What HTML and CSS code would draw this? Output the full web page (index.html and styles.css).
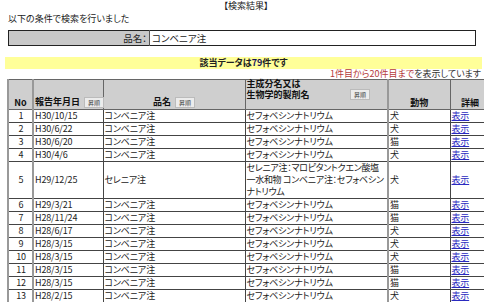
FILE: index.html
```html
<!DOCTYPE html>
<html lang="ja">
<head>
<meta charset="utf-8">
<link rel="stylesheet" href="styles.css">
</head>
<body>
<div class="title">【検索結果】</div>
<div class="cond">以下の条件で検索を行いました</div>
<table class="search">
  <tr><th>品名：</th><td>コンベニア注</td></tr>
</table>
<div class="hit">該当データは<span class="num">79</span>件です</div>
<div class="range"><span class="red">1件目から20件目まで</span>を表示しています</div>
<table class="results">
  <colgroup>
    <col class="c-no"><col class="c-date"><col class="c-name"><col class="c-ing"><col class="c-ani"><col class="c-det">
  </colgroup>
  <thead>
    <tr>
      <th class="h-no">No</th>
      <th class="h-date">報告年月日 <span class="btn">昇順</span></th>
      <th class="h-name">品名 <span class="btn">昇順</span></th>
      <th class="h-ing"><div class="ing"><span class="ing-label">主成分名又は<br>生物学的製剤名</span><span class="btn">昇順</span></div></th>
      <th class="h-ani">動物</th>
      <th class="h-det">詳細</th>
    </tr>
  </thead>
  <tbody>
    <tr><td class="no">1</td><td>H30/10/15</td><td>コンベニア注</td><td>セフォベシンナトリウム</td><td>犬</td><td><a href="#">表示</a></td></tr>
    <tr><td class="no">2</td><td>H30/6/22</td><td>コンベニア注</td><td>セフォベシンナトリウム</td><td>犬</td><td><a href="#">表示</a></td></tr>
    <tr><td class="no">3</td><td>H30/6/20</td><td>コンベニア注</td><td>セフォベシンナトリウム</td><td>猫</td><td><a href="#">表示</a></td></tr>
    <tr><td class="no">4</td><td>H30/4/6</td><td>コンベニア注</td><td>セフォベシンナトリウム</td><td>犬</td><td><a href="#">表示</a></td></tr>
    <tr><td class="no">5</td><td>H29/12/25</td><td>セレニア注</td><td class="multi">セレニア注：マロピタントクエン酸塩一水和物 コンベニア注：セフォベシンナトリウム</td><td>犬</td><td><a href="#">表示</a></td></tr>
    <tr><td class="no">6</td><td>H29/3/21</td><td>コンベニア注</td><td>セフォベシンナトリウム</td><td>猫</td><td><a href="#">表示</a></td></tr>
    <tr><td class="no">7</td><td>H28/11/24</td><td>コンベニア注</td><td>セフォベシンナトリウム</td><td>猫</td><td><a href="#">表示</a></td></tr>
    <tr><td class="no">8</td><td>H28/6/17</td><td>コンベニア注</td><td>セフォベシンナトリウム</td><td>犬</td><td><a href="#">表示</a></td></tr>
    <tr><td class="no">9</td><td>H28/3/15</td><td>コンベニア注</td><td>セフォベシンナトリウム</td><td>犬</td><td><a href="#">表示</a></td></tr>
    <tr><td class="no">10</td><td>H28/3/15</td><td>コンベニア注</td><td>セフォベシンナトリウム</td><td>犬</td><td><a href="#">表示</a></td></tr>
    <tr><td class="no">11</td><td>H28/3/15</td><td>コンベニア注</td><td>セフォベシンナトリウム</td><td>猫</td><td><a href="#">表示</a></td></tr>
    <tr><td class="no">12</td><td>H28/3/15</td><td>コンベニア注</td><td>セフォベシンナトリウム</td><td>猫</td><td><a href="#">表示</a></td></tr>
    <tr><td class="no">13</td><td>H28/2/15</td><td>コンベニア注</td><td>セフォベシンナトリウム</td><td>犬</td><td><a href="#">表示</a></td></tr>
    <tr class="cut"><td class="no"></td><td></td><td></td><td></td><td></td><td></td></tr>
  </tbody>
</table>
</body>
</html>
```
FILE: styles.css
```css
html {
  overflow: hidden;
  background: #fff;
}
body {
  margin: 0;
  padding: 0 0 0 8px;
  font-family: "Noto Sans CJK JP", "Noto Sans", sans-serif;
  font-size: 9px;
  line-height: 12px;
  color: #222;
  font-feature-settings: "palt";
}
.title {
  text-align: center;
  height: 12px;
}
.cond {
  margin-top: 1px;
  height: 12px;
}
.search {
  margin-top: 5px;
  width: 468px;
  border-collapse: collapse;
  border: 1px solid #222;
}
.search th, .search td {
  height: 14px;
  padding: 0 2px;
  font-weight: normal;
  font-size: 9.5px;
}
.search th {
  width: 136px;
  background: #c8c8c8;
  text-align: right;
  border-right: 1px solid #555;
}
.search td {
  background: #fff;
}
.hit {
  margin: 11px 2px 0 -3px;
  height: 12px;
  background: #ffff99;
  text-align: center;
  font-weight: bold;
}
.hit .num {
  color: #14145a;
}
.range {
  text-align: right;
  height: 10px;
  line-height: 10px;
  padding-right: 3px;
  color: #333;
}
.range .red {
  color: #b53a3a;
}
.results {
  margin-left: -1px;
  width: 482px;
  table-layout: fixed;
  border-collapse: collapse;
  border-left: 2px solid #999;
  border-top: 1px solid #777;
}
.c-no { width: 25px; }
.c-date { width: 70px; }
.c-name { width: 142px; }
.c-ing { width: 143px; }
.c-ani { width: 62px; }
.c-det { width: 40px; }
.results th {
  background: #cfcfcf;
  height: 28px;
  vertical-align: bottom;
  font-weight: bold;
  padding: 0 1px 1px;
  border: 1px solid #666;
  border-left-color: #999;
  line-height: 10px;
  color: #111;
  white-space: nowrap;
}
.results td {
  border: 1px solid #444;
  padding: 0 0 0 1px;
  height: 12px;
  line-height: 12px;
  color: #222;
  letter-spacing: -0.15px;
}
.results td.multi {
  letter-spacing: -0.3px;
}
.results tr.cut td {
  height: 6px;
}
.results td.no {
  text-align: center;
  border-right: 2px solid #999;
}
.results th.h-no {
  border-right: 2px solid #999;
}
.ing {
  display: flex;
  align-items: flex-end;
  justify-content: space-between;
  text-align: left;
  padding-right: 16px;
  padding-bottom: 8px;
}
.ing-label {
  line-height: 10.5px;
  margin-top: -2px;
}
.btn {
  display: inline-block;
  font-size: 6px;
  line-height: 9px;
  padding: 0 3px;
  margin-left: 2px;
  background: #ececec;
  border: 1px solid #bbb;
  font-weight: normal;
  color: #444;
  vertical-align: middle;
}
.results th.h-ani {
  border-left: 2px solid #999;
}
.results tbody td:nth-child(5) {
  border-left: 2px solid #999;
}
a {
  color: #2a2ac0;
  text-decoration: underline;
}
```
